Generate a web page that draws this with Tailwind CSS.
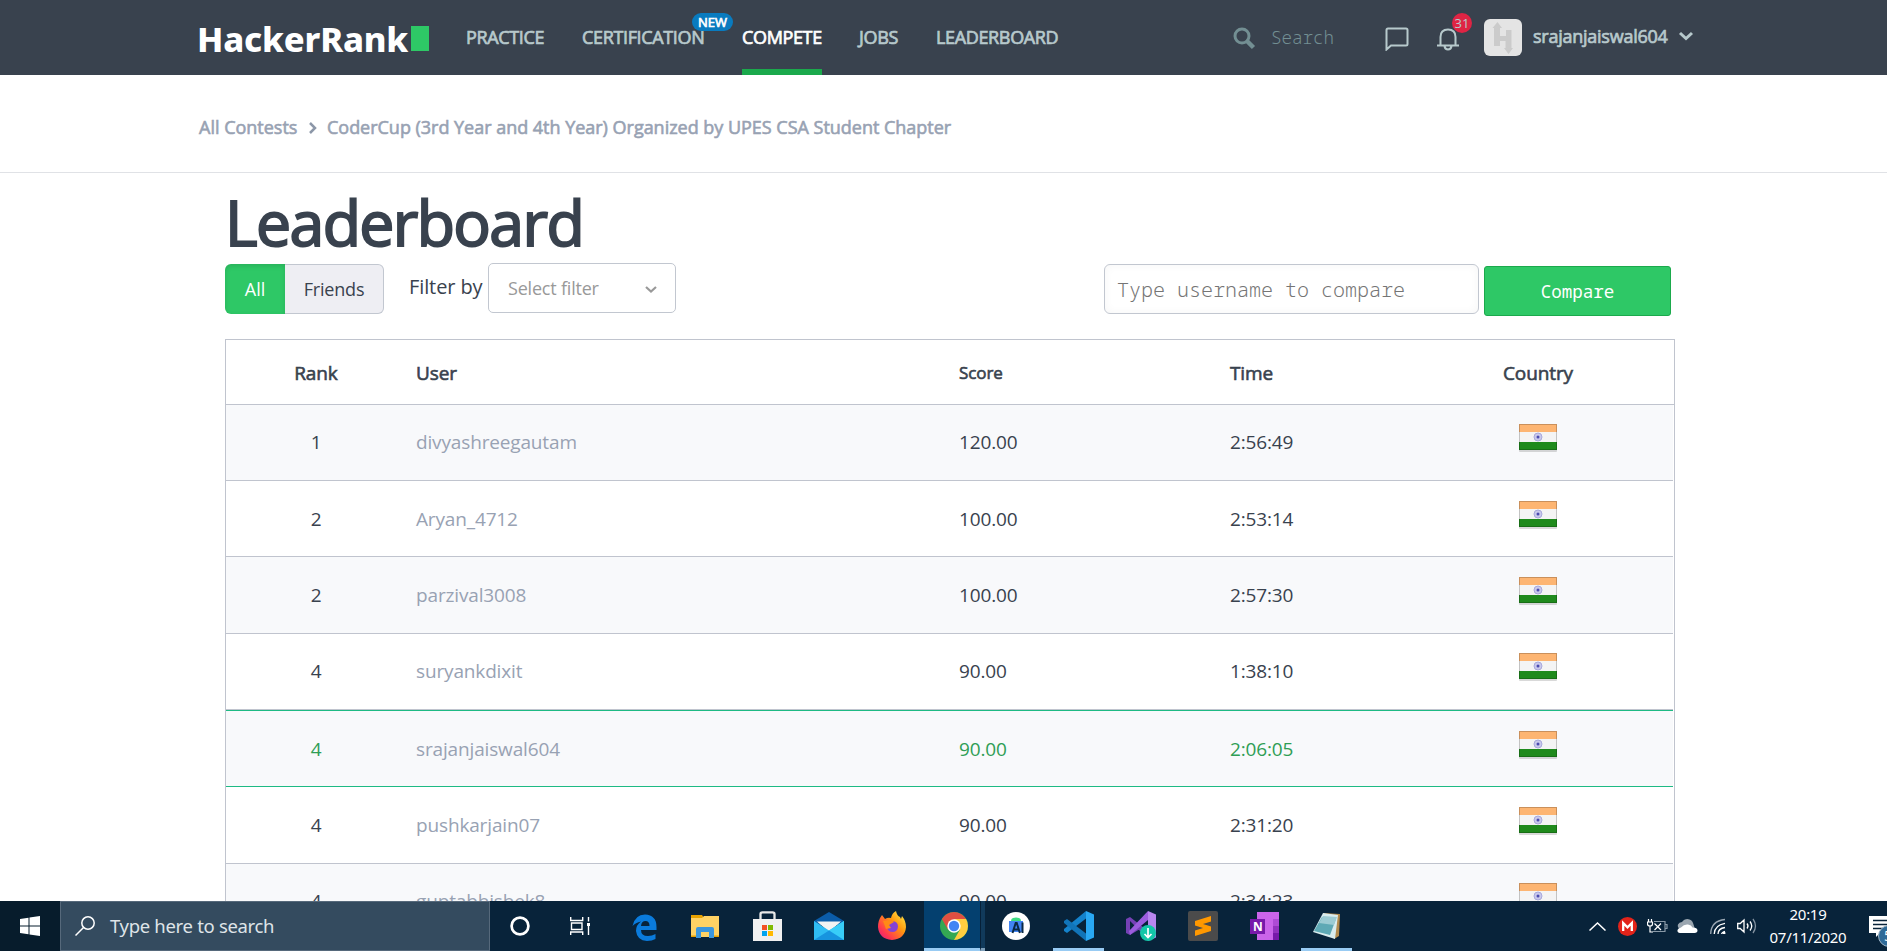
<!DOCTYPE html>
<html lang="en">
<head>
<meta charset="utf-8">
<title>Leaderboard</title>
<script src="https://cdn.jsdelivr.net/npm/@tailwindcss/browser@4"></script>
</head>
<body class="bg-white">
<div class="flex h-[951px] w-[1887px] flex-col overflow-hidden font-['Open_Sans',sans-serif] text-[#39424e]">

<header class="flex h-[75px] shrink-0 items-start bg-[#39424e] pl-[199px] text-[18px] leading-[75px] text-[#b7c9cc]">
  <div class="mt-[1px] flex w-[267px] items-center">
    <span class="-ml-[2px] w-[212px] font-['Noto_Sans'] text-[34.500px] font-extrabold tracking-[-0.2px] text-white">HackerRank</span>
    <span class="ml-[2px] h-[25px] w-[18px] bg-[#2ec866]"></span>
  </div>
  <nav class="flex [-webkit-text-stroke:0.7px]">
    <a class="w-[116px]"><span class="tracking-[-0.350px]">PRACTICE</span></a>
    <a class="relative w-[160px]"><span class="tracking-[-0.350px]">CERTIFICATION</span><span class="absolute top-[13px] left-[110px] h-[18px] w-[41px] rounded-full bg-[#097bbf] text-center text-[13px] leading-[18px] text-white">NEW</span></a>
    <a class="w-[117px] text-white"><span class="inline-block h-[75px] border-b-[6px] border-[#1ba94c] tracking-[-0.350px]">COMPETE</span></a>
    <a class="w-[77px]"><span class="tracking-[-0.350px]">JOBS</span></a>
    <a class="w-[297px]"><span class="tracking-[-0.350px]">LEADERBOARD</span></a>
  </nav>
  <svg class="mt-[27px] h-[23px] w-[23px]" viewBox="0 0 23 23" fill="none" stroke="#738f93"><circle cx="9" cy="9" r="7" stroke-width="3"/><path d="M14 14l6.500 6.500" stroke-width="4.500"/></svg>
  <span class="ml-[15px] w-[114px] font-['Noto_Sans_Mono','DejaVu_Sans_Mono',monospace] text-[17.500px] font-light text-[#738f93]">Search</span>
  <svg class="mt-[27px] h-[24px] w-[24px]" viewBox="0 0 24 24" fill="none" stroke="#b7c9cc" stroke-width="2"><path d="M1.500 22.500V3q0-1.500 1.500-1.500h18q1.500 0 1.500 1.500v14q0 1.500-1.500 1.500H6z"/></svg>
  <div class="relative ml-[27px] h-[75px] w-[48px]">
    <svg class="mt-[27px] h-[24px] w-[24px]" viewBox="0 0 24 24" fill="none" stroke="#b7c9cc" stroke-width="2"><path d="M1 18.500h22M4.500 18.500V10q0-7.500 7.500-7.500t7.500 7.500v8.500M8.500 19q.5 3.500 3.500 3.500t3.500-3.500"/></svg>
    <span class="absolute top-[13px] left-[16px] h-5 w-5 rounded-full bg-[#df2444] text-center text-[13px] leading-[20px]">31</span>
  </div>
  <svg class="mt-[19px] h-[37px] w-[38px]" viewBox="0 0 38 37"><rect width="38" height="37" rx="6" fill="#e4e4e4"/><path d="M10 27V9H8.500L13.500 3l4.500 6h-2v8h6v-6h5.500v18H29l-4.500 6-4.500-6h1.500v-7h-5.500v5z" fill="#cbcbcb"/></svg>
  <span class="ml-[11px] -mt-[1px] w-[145px] tracking-[-0.250px] [-webkit-text-stroke:0.7px]">srajanjaiswal604</span>
  <svg class="mt-[31px] h-[11px] w-[16px]" viewBox="0 0 16 11" fill="none" stroke="#b7c9cc" stroke-width="3"><path d="M2 2l6 5.500L14 2"/></svg>
</header>

<div class="flex h-[98px] shrink-0 items-start border-b border-[#e0e2e6] pt-[40px] pl-[199px] text-[18px] leading-[25px] text-[#98a2b3] [-webkit-text-stroke:0.6px]">
  <span class="w-[109px] whitespace-nowrap">All Contests</span>
  <svg class="mt-[6px] h-[14px] w-[10px]" viewBox="0 0 10 14" fill="none" stroke="#8c97a8" stroke-width="2.500"><path d="M2 2l5 5-5 5"/></svg>
  <span class="ml-[9px] tracking-[-0.020px]">CoderCup (3rd Year and 4th Year) Organized by UPES CSA Student Chapter</span>
</div>

<main class="flex min-h-0 flex-1 flex-col overflow-hidden pl-[225px]">
  <h1 class="h-[90px] shrink-0 pt-[4px] text-[62.500px] leading-[90px] tracking-[-1.600px] [-webkit-text-stroke:2px]">Leaderboard</h1>
  <div class="flex h-[76px] shrink-0 items-start text-[18px]">
    <div class="mt-[1px] flex h-[50px] w-[159px] leading-[50px]">
      <span class="w-[60px] rounded-l-[6px] bg-[#2ec866] text-center text-white shadow-[inset_0_2px_5px_rgba(0,0,0,.12)]">All</span>
      <span class="flex-1 rounded-r-[6px] border border-l-0 border-[#c2c7d0] bg-[#eeeef3] text-center leading-[49px] tracking-[-0.200px]">Friends</span>
    </div>
    <span class="ml-[25px] w-[79px] text-[20px] leading-[47px] tracking-[-0.100px]">Filter by</span>
    <div class="flex h-[50px] w-[188px] items-center rounded-[5px] border border-[#c2c7d0] pl-[19px] text-[#999]">
      <span class="w-[137px] tracking-[-0.2px]">Select filter</span>
      <svg class="mt-1 h-[8px] w-[12px]" viewBox="0 0 12 8" fill="none" stroke="#999" stroke-width="2.200"><path d="M1 1l5 4.500L11 1"/></svg>
    </div>
    <div class="mt-[1px] ml-[428px] h-[50px] w-[375px] rounded-[6px] border border-[#c2c7d0] pl-[12px] font-['Noto_Sans_Mono','DejaVu_Sans_Mono',monospace] text-[20px] leading-[49px] font-light text-[#757575] shadow-[inset_0_0_10px_rgba(0,0,0,.04)]">Type username to compare</div>
    <div class="mt-[3px] ml-[5px] h-[50px] w-[187px] rounded-[3px] border border-[#1ba94c] bg-[#2ec866] text-center font-['Noto_Sans_Mono','DejaVu_Sans_Mono',monospace] text-[17.500px] leading-[48px] text-white">Compare</div>
  </div>
  <div id="tbl" class="w-[1450px] shrink-0 border border-[#c0c4ce] text-[19px]">
    <div class="flex h-[65px] border-b border-[#c0c4ce] leading-[67px] tracking-[-0.100px] [-webkit-text-stroke:0.6px]">
      <span class="w-[180px] text-center">Rank</span><span class="ml-[10px] w-[543px]">User</span><span class="w-[271px] text-[17px] leading-[65px]">Score</span><span class="w-[250px]">Time</span><span class="w-[116px] text-center">Country</span>
    </div>
  </div>
</main>

<footer class="z-10 flex h-[50px] shrink-0 bg-[#08233a] font-['Noto_Sans',sans-serif] text-white [&>*]:shrink-0">
  <div class="flex w-[60px] items-center justify-center bg-[#071c2c]"><svg class="h-5 w-5" viewBox="0 0 20 20" fill="#fff"><path d="M0 3l8.500-1.200V9.500H0zM9.500 1.600L20 0v9.500H9.500zM0 10.500h8.500v7.700L0 17zM9.500 10.500H20V20L9.500 18.400z"/></svg></div>
  <div class="flex w-[430px] items-center border border-[#56697b] bg-[#344b5f] text-[18.500px] text-[#dfe4e8]">
    <svg class="ml-[14px] h-5 w-5" viewBox="0 0 20 20" fill="none" stroke="#fff" stroke-width="1.500"><circle cx="13" cy="7" r="6.200"/><path d="M8.500 11.500L.5 19.500"/></svg>
    <span class="ml-[15px] tracking-[-0.320px]">Type here to search</span>
  </div>
  <div class="flex w-[62px] items-center justify-center pr-[2px]"><svg class="h-5 w-5" viewBox="0 0 20 20"><circle cx="10" cy="10" r="8.400" fill="none" stroke="#fff" stroke-width="2.700"/></svg></div>
  <div class="flex w-[62px] items-center pl-[18px]"><svg class="h-5 w-[20px]" viewBox="0 0 20 20" fill="none" stroke="#fff" stroke-width="1.400"><path d="M.7 1v3.500h12V1M1.500 7h10.500v6.500H1.500zM.7 19v-3h12v3M18.500 1v4.500M18.500 10v9"/><path d="M17 7h3v3h-3z" fill="#fff" stroke="none"/></svg></div>
  <div class="flex w-[60px] items-center justify-center pt-[2px]"><svg class="h-[27px] w-[25px]" viewBox="0 0 25 27"><path d="M.5 12Q3 .5 13 .5 24.500 1 24.500 13v3H9q0 6 7 6 4 0 7.500-2v5Q20 27 15 27 5 26.500 4 17q0-6 5-9.500Q3.500 8.500.5 12zM9 12h8.500q0-5-4-5Q9.500 7 9 12z" fill="#0a7bdc"/></svg></div>
  <div class="flex w-[62px] items-center justify-center"><svg class="h-6 w-7" viewBox="0 0 28 24"><path d="M0 1h11l2 3H0z" fill="#e8a200"/><path d="M0 4h11l2-2h15v21H0z" fill="#ffd264"/><path d="M5 24V15q0-2 2-2h14q2 0 2 2v9h-5v-6h-8v6z" fill="#3b96dd"/><path d="M0 21.500h5v1.500H0zM23 21.500h5v1.500h-5z" fill="#e8a200"/></svg></div>
  <div class="flex w-[62px] items-center justify-center"><svg class="h-[30px] w-[29px]" viewBox="0 0 29 30"><path d="M7.500 11V3q0-1.700 2-1.700h10q2 0 2 1.700v8" fill="none" stroke="#e8e8e8" stroke-width="2.300"/><path d="M0 8h29v22H0z" fill="#f0f0f0"/><path d="M9 14h5v5H9z" fill="#f25022"/><path d="M15 14h5v5h-5z" fill="#7fba00"/><path d="M9 20h5v5H9z" fill="#00a4ef"/><path d="M15 20h5v5h-5z" fill="#ffb900"/></svg></div>
  <div class="flex w-[62px] items-center justify-center"><svg class="h-7 w-[30px]" viewBox="0 0 30 28"><path d="M0 9L15 0l15 9v4H0z" fill="#0b5ca8"/><path d="M3 9.500h24L15 20z" fill="#f3f3f3"/><path d="M0 9l15 9.500L30 9v19H0z" fill="#2fbcf3"/><path d="M30 28L15 18.500 30 9z" fill="#38cdf8"/><path d="M0 28l15-9.500L30 28z" fill="#1794df"/></svg></div>
  <div class="flex w-[64px] items-center justify-center"><svg class="h-[30px] w-7" viewBox="0 0 28 30"><defs><linearGradient id="fx" x1="1" y1="0" x2="0" y2="1"><stop offset="0" stop-color="#fff44f"/><stop offset=".4" stop-color="#ff980e"/><stop offset=".75" stop-color="#ff3750"/><stop offset="1" stop-color="#d31a8b"/></linearGradient></defs><path d="M4 4l3 4q3-2 6-1Q14 2 18 0q1 5 4 6l1 2 1-3q4 5 4 11Q27 28 14 29 1 28 0 16 0 9 4 4z" fill="url(#fx)"/><circle cx="14.500" cy="15.500" r="5.500" fill="#8642d6"/><path d="M5 10l9-1 2 2-5 3 2 3-5 1z" fill="#ff8a16"/></svg></div>
  <div class="flex w-[56px] items-center justify-center border-b-[3px] border-[#98cbf3] bg-[#04406f] pt-[3px] pl-[3px]"><svg class="h-7 w-7" viewBox="0 0 28 28"><circle cx="14" cy="14" r="14" fill="#34a853"/><path d="M14 14L1.900 7A14 14 0 0 1 26.100 7z" fill="#df4f42"/><path d="M14 7h12.100A14 14 0 0 1 14 28l6-10.500z" fill="#ffcd40"/><path d="M1.900 7l6 10.500L14 14V7z" fill="#df4f42"/><circle cx="14" cy="14" r="6.700" fill="#fff"/><circle cx="14" cy="14" r="5.200" fill="#4285f4"/></svg></div>
  <div class="w-[5px] border-b-[3px] border-l border-b-[#7e9fba] border-l-[#062038] bg-[#113a5b]"></div>
  <div class="flex w-[61px] items-center justify-center"><svg class="h-7 w-7" viewBox="0 0 28 28"><circle cx="14" cy="14" r="14" fill="#fff"/><path d="M9 9q0-2.500 2-3l3-.5 3 .5q2 .5 2 3z" fill="#3ddc84"/><path d="M7 9h14v11H7z" fill="#4285f4"/><path d="M10.500 21l3.200-10h1l3.200 10M12 17.500h4.500M20.500 10.500v10.500" fill="none" stroke="#0b2a45" stroke-width="2"/></svg></div>
  <div class="ml-[7px] flex w-[51px] items-center justify-center border-b-[3px] border-[#98cbf3] pt-[3px]"><svg class="h-[30px] w-[30px]" viewBox="0 0 30 30"><path d="M22 7.500L3 22 0 20v-2L22 0z" fill="#1482cb"/><path d="M22 22.500L3 8 0 10v2l22 18z" fill="#1174b8"/><path d="M22 0l8 3.500v23L22 30z" fill="#29a8f3"/></svg></div>
  <div class="ml-[11px] flex w-[51px] items-center justify-center"><svg class="h-[30px] w-[30px]" viewBox="0 0 30 30"><path d="M22 0l8 3.500v23L22 30z" fill="#b886ef"/><path d="M0 8l4-2 18 14v8L4 10v10l7-5 3 3L4 24l-4-2z" fill="#7541b5"/><path d="M22 0v9L4 24l-1-4z" fill="#9b5dde"/><circle cx="22" cy="22" r="8" fill="#13c6a8"/><path d="M22 17v9M18.500 23l3.500 3.500 3.500-3.500" fill="none" stroke="#fff" stroke-width="1.700"/></svg></div>
  <div class="ml-[11px] flex w-[51px] items-center justify-center"><svg class="h-[30px] w-[30px]" viewBox="0 0 30 30"><rect width="30" height="30" rx="2" fill="#4b4b4b"/><path d="M7 10l16-5v5.500l-8 2.500 8 2.500V20L7 25v-5.500l8-2.500-8-2.500z" fill="#ff9800"/></svg></div>
  <div class="ml-[11px] flex w-[51px] items-center justify-center"><svg class="h-7 w-[30px]" viewBox="0 0 30 28"><path d="M7 0h22v28H7z" fill="#ca64ea"/><path d="M23 7h6v7h-6z" fill="#ae4bd5"/><path d="M23 14h6v7h-6z" fill="#9332bf"/><path d="M23 21h6v7h-6z" fill="#7719aa"/><path d="M0 7h15v15H0z" fill="#7719aa"/><text x="3" y="19" font-size="12" font-weight="bold" fill="#fff" font-family="Open Sans">N</text></svg></div>
  <div class="ml-[11px] flex w-[51px] items-center justify-center border-b-[3px] border-[#98cbf3] pt-[3px]"><svg class="h-7 w-7" viewBox="0 0 28 28"><path d="M10 1l17 1-1 22-5 3z" fill="#b28a4d"/><path d="M10 1l15 2-3 24L0 20z" fill="#d9ecee"/><path d="M9 5l14 2-6 16L1 19z" fill="#5ea9b5"/><path d="M10 4l14 1-3 8-15-2z" fill="#9ccbd3"/></svg></div>
  <div class="ml-[237px] flex items-center">
    <svg class="h-[9px] w-[17px]" viewBox="0 0 17 9" fill="none" stroke="#fff" stroke-width="1.500"><path d="M.5 8.500l8-7.500 8 7.500"/></svg>
    <svg class="ml-[12px] h-[19px] w-[19px]" viewBox="0 0 19 19"><circle cx="9.500" cy="9.500" r="9.500" fill="#e2231a"/><path d="M5.200 14V6l4.300 4.300L13.800 6v8" fill="none" stroke="#fff" stroke-width="2.300"/></svg>
    <svg class="ml-[10px] h-[14px] w-[21px]" viewBox="0 0 21 14" fill="none" stroke="#fff" stroke-width="1.200"><path d="M1.500 0v3M4.500 0v3M.5 3h5v2q0 2-2.500 2t-2.500-2zM3 7v6h3"/><path d="M7 2.500h11v10H5M18.500 5.500h1.500v4h-1.500" stroke="#8999a7"/><path d="M7.500 4.500l6.500 6.500M14 4.500L7.500 11"/></svg>
    <svg class="ml-[9px] h-[14px] w-[21px]" viewBox="0 0 21 14"><path d="M3 10Q0 8 1 5.500 2 3 5 3 7 0 10.500 0 15 .5 16 4l2 6z" fill="#9aa5af"/><path d="M3 14q-3-.5-2.500-3 .5-2 3.500-2.500Q7 5 11 5.500q3.500.5 4.500 3 5 0 5 3 0 2-3 2.500z" fill="#fff"/></svg>
    <svg class="ml-[12px] h-[16px] w-[17px]" viewBox="0 0 17 16" fill="none" stroke="#fff" stroke-width="1.300"><path d="M.7 16Q1 3 15 1.500" stroke="#9aa7b3"/><path d="M4.200 16Q4.500 7 15 5.300M8 16q0-5.500 7-6.500M11.500 16q.5-2 3.500-2.700"/><circle cx="14" cy="15" r="1.500" fill="#fff" stroke="none"/></svg>
    <svg class="ml-[10px] h-[16px] w-[20px]" viewBox="0 0 20 16" fill="none" stroke="#fff" stroke-width="1.300"><path d="M.7 5.500h2.500L7 2v12l-3.800-3.500H.7zM10 5.500q2 2.500 0 5M13 3.500q3.500 4.500 0 9"/><path d="M16 1q5 7 0 14" stroke="#8291a0"/></svg>
  </div>
  <div class="ml-[10px] flex w-[82px] flex-col text-center text-[15px] leading-[23px] tracking-[-0.3px]"><span class="mt-[2px]">20:19</span><span>07/11/2020</span></div>
  <div class="ml-[20px] w-[18px] overflow-hidden"><svg class="mt-[15px] h-[32px] w-[20px]" viewBox="0 0 20 32"><path d="M0 0h20v17H11l-4 4v-4H0z" fill="#fff"/><path d="M4 4.500h14M4 8.500h14M4 12.500h10" stroke="#08233a" stroke-width="1.300"/><circle cx="20" cy="20" r="10.500" fill="#2f6a98" stroke="#9db4c6"/><text x="15" y="25" font-size="14" fill="#fff" font-family="Open Sans">5</text></svg></div>
</footer>
</div>

<template id="flag"><svg class="h-[29px] w-[40px]" viewBox="0 0 40 29"><rect x="1" y="3" width="38" height="26" rx="1" fill="#000" opacity=".15"/><rect x="1" y="1" width="38" height="26" fill="#f4f4f4"/><path d="M1 1h38v8H1z" fill="#fdb572"/><path d="M1 19h38v8H1z" fill="#1f8a1c"/><rect x="1.500" y="1.500" width="37" height="25" fill="none" stroke="#000" stroke-opacity=".2"/><circle cx="20" cy="14" r="4" fill="#c9c9ec" stroke="#a9a9dc" stroke-width="1"/><circle cx="20" cy="14" r="1.500" fill="#4b4bb0"/></svg></template>
<script>
const rows = [
  [1,'divyashreegautam','120.00','2:56:49'],[2,'Aryan_4712','100.00','2:53:14'],[2,'parzival3008','100.00','2:57:30'],
  [4,'suryankdixit','90.00','1:38:10'],[4,'srajanjaiswal604','90.00','2:06:05'],[4,'pushkarjain07','90.00','2:31:20'],[4,'guptabhishek8','90.00','2:34:23']];
const heights = [76,76,77,76,77,77,76];
const pads = [0,1,1,0,1,1,0];
const table = document.getElementById('tbl');
const flag = document.getElementById('flag').innerHTML;
rows.forEach(([rank,user,score,time], i) => {
  const own = i === 4;
  const r = document.createElement('div');
  r.className = 'flex border-b leading-[75px] tracking-[-0.150px] mr-px ' + (i % 2 ? 'bg-white ' : 'bg-[#f8f9fb] ') + (own ? 'border-t border-[#1eba84] text-[#2f9e55]' : 'border-[#c0c4ce]');
  r.style.height = heights[i] + 'px';
  r.style.paddingTop = pads[i] + 'px';
  r.innerHTML = `<span class="w-[180px] text-center">${rank}</span><span class="ml-[10px] w-[543px] text-[#98a2b3]">${user}</span><span class="w-[271px]">${score}</span><span class="w-[250px]">${time}</span><span class="flex w-[116px] justify-center pt-[18px]">${flag}</span>`;
  table.append(r);
});
</script>
</body>
</html>
